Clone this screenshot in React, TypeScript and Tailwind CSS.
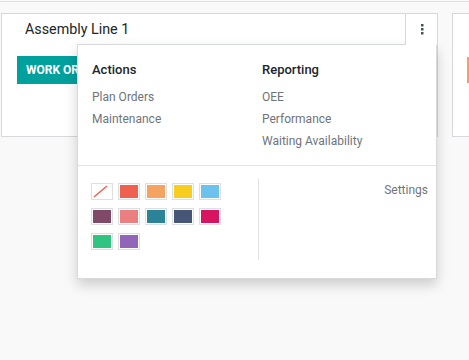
import React from 'react';

const swatches = [
  'none', '#F06050', '#F4A460', '#F7CD1F', '#6CC1ED',
  '#814968', '#EB7E7F', '#2C8397', '#475577', '#D6145F',
  '#30C381', '#9365B8',
];

const Swatch: React.FC<{ color: string }> = ({ color }) => (
  <div className="w-[22px] h-[17px] border border-[#dcdfe3] p-[1px] bg-white">
    {color === 'none' ? (
      <svg width="18" height="13" viewBox="0 0 18 13" className="block">
        <line x1="1" y1="12" x2="14" y2="1" stroke="#F06050" strokeWidth="1.5" />
      </svg>
    ) : (
      <div className="w-full h-full" style={{ backgroundColor: color }} />
    )}
  </div>
);

const MenuColumn: React.FC<{ title: string; items: string[]; className?: string }> = ({ title, items, className }) => (
  <div className={className}>
    <div className="text-[13px] leading-5 font-medium text-[#212529] mb-[6px]">{title}</div>
    {items.map((item) => (
      <div key={item} className="text-[12px] leading-[22px] text-[#6f747b]">
        {item}
      </div>
    ))}
  </div>
);

const Dropdown: React.FC = () => (
  <div className="absolute right-0 top-[30px] w-[360px] h-[235px] bg-white border border-[#d7d9dc] shadow-[0_6px_12px_rgba(0,0,0,0.175)] z-10 flex flex-col">
    <div className="flex pl-[14px] pt-[15px] pb-[13px]">
      <MenuColumn title="Actions" items={['Plan Orders', 'Maintenance']} className="w-[170px]" />
      <MenuColumn title="Reporting" items={['OEE', 'Performance', 'Waiting Availability']} />
    </div>
    <div className="h-px bg-[#e2e4e7]" />
    <div className="flex pt-[13px]">
      <div className="w-[180px] pl-[13px] pt-[4px]">
        <div className="grid grid-cols-[repeat(5,22px)] gap-x-[5px] gap-y-[8px]">
          {swatches.map((c, i) => (
            <Swatch key={i} color={c} />
          ))}
        </div>
      </div>
      <div className="w-px h-[81px] bg-[#e2e4e7]" />
      <div className="flex-1 text-right pr-[8px] pt-px text-[12px] leading-5 text-[#6f747b]">Settings</div>
    </div>
  </div>
);

export default function App() {
  return (
    <div className="w-[469px] h-[360px] bg-[#f9f9f9] overflow-hidden font-['Roboto',sans-serif]">
      <div className="h-px" />
      <div className="h-px bg-[#dcdfe3]" />
      <div className="flex gap-[14px] pt-[11px] pl-px">
        <div className="relative shrink-0 w-[437px] h-[124px] bg-white border border-[#d5d8dc]">
          <div className="h-[31px] flex items-center pl-[23px] pt-px">
            <span className="text-[14.3px] text-[#212529]">Assembly Line 1</span>
          </div>
          <div className="pl-[15px] pt-[11px]">
            <span className="inline-flex items-center h-[28px] px-[9px] bg-[#00A09D] text-white text-[12px] font-bold uppercase">
              Work Orders
            </span>
          </div>
          <div className="absolute right-0 top-0 w-[32px] h-[31px] bg-white border-l border-[#d5d8dc] z-20 flex items-center justify-center">
            <svg width="4" height="11" viewBox="0 0 4 11">
              <rect x="1" y="0" width="2.5" height="2.5" fill="#495057" />
              <rect x="1" y="4" width="2.5" height="2.5" fill="#495057" />
              <rect x="1" y="8" width="2.5" height="2.5" fill="#495057" />
            </svg>
          </div>
          <Dropdown />
        </div>
        <div className="shrink-0 w-[300px] h-[124px] bg-white border border-[#d5d8dc] pl-[14px] pt-[43px]">
          <div className="w-[60px] h-[26px] bg-[#F3A25B]" />
        </div>
      </div>
    </div>
  );
}
